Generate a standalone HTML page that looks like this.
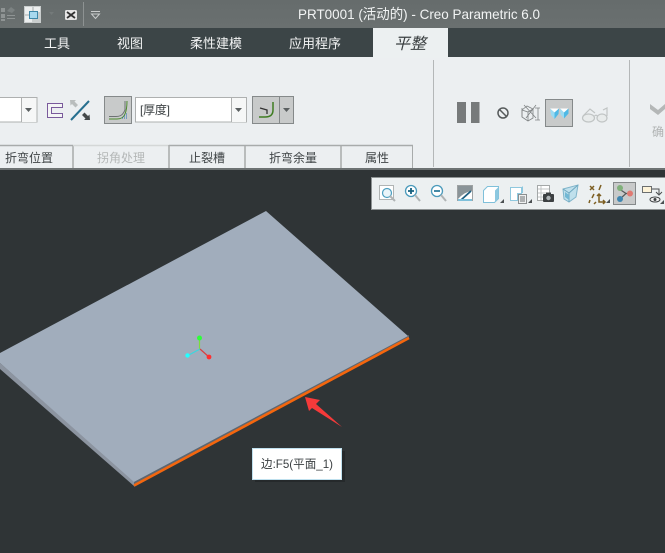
<!DOCTYPE html>
<html><head><meta charset="utf-8"><style>
html,body{margin:0;padding:0;background:#2f3436;width:665px;height:553px;overflow:hidden}
svg{display:block}
text{font-family:"Liberation Sans","Noto Sans CJK SC",sans-serif}
</style></head><body>
<svg width="665" height="553" viewBox="0 0 665 553" xmlns="http://www.w3.org/2000/svg">
<defs>
<linearGradient id="tb" x1="0" y1="0" x2="0" y2="1"><stop offset="0" stop-color="#666c6c"/><stop offset="1" stop-color="#6a7070"/></linearGradient>
</defs>
<!-- bars -->
<rect x="0" y="0" width="665" height="28" fill="url(#tb)"/>
<rect x="0" y="28" width="665" height="29" fill="#3c4547"/>
<rect x="0" y="57" width="665" height="111" fill="#eceff1"/>
<rect x="0" y="168" width="665" height="2" fill="#6d7273"/>
<rect x="0" y="170" width="665" height="383" fill="#2f3436"/>
<!-- QAT icons -->
<g fill="#8f9494"><rect x="1" y="8" width="4" height="4"/><rect x="1" y="14" width="4" height="4"/><rect x="1" y="19" width="4" height="2"/><rect x="7" y="15" width="8" height="1"/><rect x="7" y="18" width="8" height="1"/></g>
<path d="M7 11l4-4 4 3-3 3z" fill="#7c8282"/>
<rect x="24" y="6" width="17" height="17" fill="#c9cdcd"/>
<rect x="25" y="7" width="7" height="7" fill="#eceeee"/>
<rect x="34" y="7" width="6" height="5" fill="#eceeee"/>
<rect x="25" y="16" width="7" height="6" fill="#eceeee"/>
<rect x="29.500" y="11.500" width="8" height="7" fill="#a8d8ee" stroke="#3f87a8"/>
<path d="M49 12h5l-2.500 3z" fill="#747a7a"/>
<rect x="65.500" y="10.500" width="11" height="9" rx="1" fill="#e8e8e8" stroke="#e4e4e4"/>
<path d="M67 12l8 6M75 12l-8 6" stroke="#333" stroke-width="1.800"/>
<rect x="83" y="2" width="1" height="24" fill="#8d9292"/>
<rect x="91" y="11" width="9" height="1" fill="#c9cccc"/>
<path d="M91.500 14h8l-4 4.500z" fill="none" stroke="#c9cccc"/>
<text x="298" y="19" font-size="14" fill="#f2f4f4" textLength="242" lengthAdjust="spacingAndGlyphs">PRT0001 (活动的) - Creo Parametric 6.0</text>
<!-- Tabs -->
<g font-size="13" fill="#f3f4f4">
<text x="44" y="48" textLength="26">工具</text>
<text x="117" y="48" textLength="26">视图</text>
<text x="190" y="48" textLength="52">柔性建模</text>
<text x="289" y="48" textLength="52">应用程序</text>
</g>
<rect x="373" y="28" width="75" height="30" fill="#ecf0f1"/>
<text x="394" y="49" font-size="16" font-style="italic" fill="#3a3f41" textLength="32">平整</text>
<!-- Ribbon: input -->
<rect x="-2" y="97.500" width="39" height="24.500" fill="#fff" stroke="#aeb0b0"/>
<rect x="22" y="98" width="14.500" height="24" fill="#f6f7f7"/>
<rect x="21" y="98" width="1" height="24" fill="#aeb0b0"/>
<path d="M25 108h7l-3.500 4z" fill="#5a5f60"/>
<path d="M62.500 103.500H47.500V117.500H62.500V113.500H51.500V107.500H62.500Z" fill="#f4f5f5" stroke="#7a5a9c" stroke-width="1"/>
<path d="M71 120L89 101" stroke="#276f8f" stroke-width="2" fill="none"/>
<path d="M70 100h6l-1.500 1.500 3.500 3.500-2.500 2.500-3.500-3.500-1.500 1.500z" fill="#b9bdbd"/>
<path d="M90 120h-6l1.500-1.500-3.500-3.500 2.500-2.500 3.500 3.500 1.500-1.500z" fill="#45494a"/>
<!-- button 1 -->
<rect x="104.500" y="96.500" width="27" height="27" fill="#c8caca" stroke="#85898a"/>
<path d="M109 116.500h7q5 0 7-3t2-4V101" stroke="#6d7173" fill="none"/>
<path d="M109 119h8q6 0 8-5t2-13" stroke="#4c8a2d" fill="none" stroke-width="1"/>
<path d="M126 114h1M124 116h1M126 116h1M122 118h1M124 118h1M126 118h1" stroke="#2a70b0"/>
<!-- combo -->
<rect x="135.500" y="97.500" width="111" height="24.500" fill="#fff" stroke="#aeb0b0"/>
<rect x="232" y="98" width="14" height="24" fill="#f6f7f7"/>
<rect x="231" y="98" width="1" height="24" fill="#aeb0b0"/>
<path d="M235 108h7l-3.500 4z" fill="#5a5f60"/>
<text x="140" y="114" font-size="12" fill="#3d4244" textLength="30">[厚度]</text>
<!-- button 2 -->
<rect x="252.500" y="96.500" width="41" height="27" fill="#c8caca" stroke="#85898a"/>
<rect x="279" y="97" width="1" height="26" fill="#85898a"/>
<path d="M259 117h6q8 0 8-7v-8" stroke="#3f7d22" stroke-width="1.500" fill="none"/>
<path d="M260 108l7 2v4" stroke="#333" fill="none" stroke-width="1.300"/>
<path d="M283 108h7l-3.500 4z" fill="#5a5f60"/>
<!-- lower tabs -->
<g fill="none" stroke="#a8abab" stroke-width="1.500">
<path d="M0 145.500H73M73 145V168"/>
<path d="M73 145.500H169" stroke="#d4d7d7"/>
<path d="M169 145V168M169 145.500H245M245 145V168M245 145.500H341M341 145V168M341 145.500H413" />
<path d="M412.500 145V168" stroke-width="1"/>
</g>
<g font-size="12" fill="#3f4446">
<text x="5" y="162" textLength="48">折弯位置</text>
<text x="97" y="162" fill="#b4b7b7" textLength="48">拐角处理</text>
<text x="189" y="162" textLength="36">止裂槽</text>
<text x="269" y="162" textLength="48">折弯余量</text>
<text x="365" y="162" textLength="24">属性</text>
</g>
<!-- separators -->
<rect x="433" y="60" width="1" height="107" fill="#b4b7b8"/>
<rect x="629" y="60" width="1" height="107" fill="#b4b7b8"/>
<!-- pause etc -->
<rect x="457" y="102" width="9" height="21" fill="#777a7b"/>
<rect x="471" y="102" width="8.500" height="21" fill="#777a7b"/>
<circle cx="503" cy="113" r="5" fill="none" stroke="#565a5b" stroke-width="1.500"/>
<path d="M499.500 109.500l7 7" stroke="#565a5b" stroke-width="1.500"/>
<g stroke="#7f8384" fill="none" stroke-width=".8">
<path d="M522 110l5-4 6 3v9l-5 3-6-4z"/><path d="M528 112v9M522 110l6 2 5-3"/><path d="M524 105l12 13M536 105l-10 13"/><path d="M538 108v12M535 108h5M535 120h5M522 108v9"/>
</g>
<rect x="545.500" y="99.500" width="27" height="27" fill="#c8caca" stroke="#85898a"/>
<path d="M550 108.500h9l-4.500 4z" fill="#fff"/>
<path d="M550 108.500l4.500 4v6.500l-3.500-4z" fill="#9bdaf2"/>
<path d="M559 108.500l-4.500 4v6.500l4-5z" fill="#4fb9e6"/>
<path d="M560 108.500h8.500l-4.500 4z" fill="#fff"/>
<path d="M560 108.500l4 4v6l-3.500-4z" fill="#9bdaf2"/>
<path d="M568.500 108.500l-4.500 4v6l4.500-5z" fill="#4fb9e6"/>
<g stroke="#c0c4c4" fill="#e8ebeb" stroke-width="1.200">
<ellipse cx="588.500" cy="118" rx="6" ry="4"/><ellipse cx="602" cy="118" rx="5" ry="4"/>
<path d="M594.500 116q1.500-1.500 3 0M583 116l7-7 5 4M607 116v-8l-4 2" fill="none"/>
</g>
<path d="M650 104l8 6 7-6v5l-7 6-8-6z" fill="#b4b7b7"/>
<text x="652" y="136" font-size="12" fill="#b0b3b3">确</text>
<!-- plate -->
<polygon points="0,363 134,481 134,486 0,369" fill="#8c94a0"/>
<polygon points="134,482 409,335 409,339 134,487" fill="#5d6670"/>
<polygon points="266,211 408,336 134,482 0,363 0,353" fill="#a1adbc"/>
<path d="M134 485.500L409 338" stroke="#f4660e" stroke-width="2.600" fill="none"/>
<!-- triad -->
<path d="M199.500 338V349" stroke="#7ddc3a" stroke-width="1.200"/>
<path d="M200 349L187 356" stroke="#38d8e0" stroke-width="1.200"/>
<path d="M200 349L209 357" stroke="#d84040" stroke-width="1.200"/>
<circle cx="199.500" cy="338" r="2.500" fill="#2dff3a"/>
<circle cx="187.500" cy="355.500" r="2.200" fill="#22ffff"/>
<circle cx="209" cy="357" r="2.400" fill="#ff2f2f"/>
<!-- arrow -->
<polygon points="305,397 320,400 316,404 342,427 312,408 309,411" fill="#f53a3a"/>
<!-- tooltip -->
<rect x="255" y="451" width="90" height="31" fill="#1f2324" opacity=".6"/>
<rect x="252.500" y="448.500" width="89" height="31" fill="#fff" stroke="#bfe0ee"/>
<text x="261" y="468" font-size="12" fill="#3a3f41" textLength="72" lengthAdjust="spacingAndGlyphs">边:F5(平面_1)</text>
<!-- view toolbar -->
<rect x="371.500" y="177.500" width="294" height="32" fill="#ecf0f1" stroke="#8e9394"/>
<!-- refit -->
<rect x="379.500" y="185.500" width="14" height="14" fill="#fff" stroke="#b0b4b4"/>
<circle cx="387" cy="193" r="4.500" fill="#eaf5fa" stroke="#4d9fc0" stroke-width="1.200"/>
<path d="M390 196l5 5" stroke="#b0b4b5" stroke-width="2"/>
<!-- zoom in -->
<circle cx="411" cy="191" r="5.500" fill="#fff" stroke="#4a9abb" stroke-width="1.300"/>
<path d="M408 191h6M411 188v6" stroke="#17617f" stroke-width="1.800"/>
<path d="M415 195l5 6" stroke="#b0b4b5" stroke-width="2"/>
<!-- zoom out -->
<circle cx="437" cy="191" r="5.500" fill="#fff" stroke="#4a9abb" stroke-width="1.300"/>
<path d="M434 191h6" stroke="#2f7c9c" stroke-width="1.800"/>
<path d="M441 195l5 6" stroke="#b0b4b5" stroke-width="2"/>
<!-- repaint -->
<rect x="457.500" y="185.500" width="15" height="15" fill="#fff" stroke="#9ea2a3"/>
<path d="M458 186h14v5q-8 1-14 8z" fill="#8a9498"/>
<path d="M461 200l10-9" stroke="#1f5f80" stroke-width="1.800"/>
<rect x="458" y="199" width="14" height="2" fill="#7ec0da"/>
<!-- saved views -->
<path d="M483.500 190.500l4-4h11v12l-4 4h-11z" fill="#fff" stroke="#7fc0da"/>
<path d="M495 190.500l3.500-3.500v11l-3.500 4z" fill="#8cc8e0"/>
<path d="M500 203h4v-4z" fill="#4b5052"/>
<!-- view manager -->
<path d="M510.500 187.500h11v6h-4v7h-7z" fill="#fff" stroke="#8fc8de"/>
<path d="M522 186l1 1v6h-1z" fill="#8cc8e0"/>
<rect x="518.500" y="194.500" width="8" height="9" fill="#f0f2f2" stroke="#8b8f90"/>
<path d="M520 197h5M520 199h5M520 201h5" stroke="#6c7071"/>
<path d="M528 203h4v-4z" fill="#4b5052"/>
<!-- camera -->
<rect x="537.500" y="185.500" width="12" height="15" fill="#fff" stroke="#a4a8a8"/>
<path d="M538 189h11M538 193h11M538 197h8M541 186v14" stroke="#c0c4c4"/>
<rect x="543" y="194" width="11" height="8" rx="1" fill="#3c4042"/>
<rect x="546" y="192.500" width="5" height="2" fill="#3c4042"/>
<circle cx="548.500" cy="198" r="2.200" fill="#aeb4b6"/>
<!-- perspective -->
<path d="M563 189l15-4-2 12-7 5-5-3z" fill="#bfe0ec" stroke="#7fb4ca"/>
<path d="M563 189l6 4v9M569 193l9-8" stroke="#6ea8c0" fill="none"/>
<path d="M565 192l4 3v5l-4-3z" fill="#72b8d4"/>
<!-- csys toggles -->
<g stroke="#7d5f22" stroke-width="1.500" fill="none">
<path d="M590 186l4 4M594 186l-4 4"/><path d="M601 185l-2 5"/><path d="M594 194l-2 4"/><path d="M590 200l-1 3"/>
<path d="M599 194v8h6M597 196l2-2 2 2M603 200l2 2-2 2"/><path d="M596 202l-2 2"/>
</g>
<path d="M606 203h4v-4z" fill="#4b5052"/>
<!-- active -->
<rect x="613.500" y="182.500" width="22" height="22" fill="#c8caca" stroke="#85898a"/>
<path d="M620 189.500l6 4-6 5.500M626 193.500h5" stroke="#55595a" fill="none" stroke-width="1.200"/>
<circle cx="620" cy="188" r="3" fill="#7fb07a"/>
<circle cx="630" cy="193.500" r="3" fill="#e07a72"/>
<circle cx="620" cy="199" r="3" fill="#3f86b0"/>
<!-- last -->
<rect x="642.500" y="186.500" width="9" height="6" fill="#fdf3d8" stroke="#6a6e6f"/>
<path d="M652 189h7v5M656 192l3 3 3-3" stroke="#4a4e4f" fill="none"/>
<ellipse cx="655" cy="199.500" rx="5" ry="2.500" fill="#f0f0f0" stroke="#3c4042"/>
<circle cx="655" cy="199.500" r="1.500" fill="#3c4042"/>
<path d="M660 204h4v-4z" fill="#4b5052"/>
</svg>
</body></html>
